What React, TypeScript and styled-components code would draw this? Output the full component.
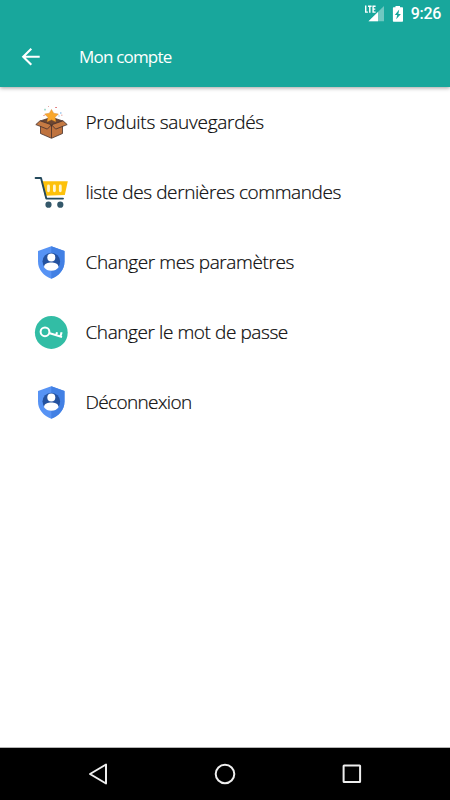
import React from "react";
import styled, { createGlobalStyle } from "styled-components";

const GlobalStyle = createGlobalStyle`
  * { box-sizing: border-box; }
  body { margin: 0; background: #fff; }
`;

const Screen = styled.main`
  width: 450px;
  height: 800px;
  display: flex;
  flex-direction: column;
  background: #fff;
  font-family: "Open Sans", "Noto Sans", sans-serif;
  overflow: hidden;
`;

const Header = styled.header`
  height: 87px;
  flex: none;
  background: #18a79c;
  box-shadow: 0 1px 4px rgba(0, 0, 0, 0.38);
  color: #fff;
`;

const StatusBar = styled.div`
  height: 27px;
  display: flex;
  justify-content: flex-end;
  align-items: center;
  padding-right: 9px;
`;

const Clock = styled.span`
  font: 500 16px/27px Roboto, sans-serif;
  letter-spacing: -0.3px;
  margin-left: 7px;
`;

const Toolbar = styled.div`
  height: 60px;
  display: flex;
  align-items: center;
  padding-left: 19px;
`;

const Title = styled.h1`
  margin: 0 0 0 36px;
  font-size: 17px;
  font-weight: 400;
  line-height: 24px;
  letter-spacing: -0.8px;
`;

const Menu = styled.ul`
  flex: 1;
  margin: 0;
  padding: 0;
  list-style: none;
`;

const MenuItem = styled.li`
  height: 70px;
  display: flex;
  align-items: center;
  padding-left: 34px;
`;

const Label = styled.span<{ $spacing: number }>`
  margin-left: 17.5px;
  color: #080808;
  font-size: 19px;
  font-weight: 300;
  line-height: 28px;
  white-space: nowrap;
  -webkit-text-stroke: 0.2px #080808;
  letter-spacing: ${(p) => p.$spacing}px;
`;

const NavBar = styled.nav`
  height: 53px;
  flex: none;
  display: flex;
  justify-content: space-between;
  align-items: center;
  padding: 0 84px;
  background: #000;
  border-top: 1px solid #b4b4b4;
`;

const Icon = styled.svg`
  display: block;
  flex: none;
`;

const Signal = () => (
  <Icon width="20" height="20" viewBox="0 0 20 20">
    <path d="M4.5 17.3 20 2V17.3Z" fill="#fff" opacity=".38" />
    <path d="M4.5 17.3 14 8V17.3Z" fill="#fff" />
    <path
      d="M1.7 1.5v6.6h2.2M4 2.2h3.6M5.8 2.2v6.6M11.6 2.2H9.1v5.9h2.5M9.1 5.1h2.2"
      fill="none"
      stroke="#fff"
      strokeWidth="1.4"
    />
  </Icon>
);

const Battery = () => (
  <Icon width="12" height="18" viewBox="0 0 12 18">
    <path d="M3.5 1H8v1.2h2.3q.7 0 .7.7v13.2q0 .7-.7.7H1.6q-.7 0-.7-.7V2.9q0-.7.7-.7h1.9Z" fill="#fff" />
    <path d="M7.2 4.6 2.8 10h2.4l-1 4.3L8.9 9H6.4Z" fill="#18a79c" />
  </Icon>
);

const StatusIcons = styled.div`
  display: flex;
  align-items: center;
  gap: 8px;
`;

const Back = () => (
  <Icon width="24" height="24" viewBox="0 0 24 24">
    <path d="M12.3 3.8 4.2 11.8l8.1 8M4.2 11.8H20.7" fill="none" stroke="#fff" strokeWidth="2.1" />
  </Icon>
);

const BoxIcon = () => (
  <Icon width="34" height="34" viewBox="6 3 34 34">
    <path d="M12.5 20.5h22v11L23.5 36.3 12.5 31.5Z" fill="#bf733f" stroke="#44302c" strokeWidth=".8" />
    <path d="M12 19l11.5-3.8L35 19l-11.5 5Z" fill="#6d4631" stroke="#44302c" strokeWidth=".7" />
    <path d="m23.5 7.400 2.200 3.800 4.700.8-3.300 3.300.7 4.500-4.300-2-4.300 2 .7-4.500-3.300-3.300 4.700-.8Z" fill="#f9a72b" stroke="#ce7d2a" strokeWidth=".4" />
    <path d="m12 18.8 11.5 4-4.2 4.3L7.8 22.6Z" fill="#c57a43" stroke="#44302c" strokeWidth=".8" />
    <path d="m35 18.8-11.5 4 4.2 4.3 11.5-4.5Z" fill="#c57a43" stroke="#44302c" strokeWidth=".8" />
    <path d="M23.5 23v13" stroke="#44302c" strokeWidth=".8" />
    <g fill="none" strokeWidth="1">
      <path d="M17 6.8v1.7" stroke="#57b59b" />
      <path d="M20 4.5h1M33 13.2h1.5" stroke="#e6aaa5" />
      <path d="M27.3 5.5h1.5M15.5 13.5h1" stroke="#dc5e63" />
      <path d="M32 11h1.5M30.5 14h1" stroke="#69a7df" />
    </g>
  </Icon>
);

const CartIcon = () => (
  <Icon width="34" height="34" viewBox="6 5 34 34">
    <path d="M13.5 11.3h26.3l-3 13.7-20 .8Z" fill="#fdc10b" />
    <path d="M20.5 16v4.8M26.4 16v4.8M32.3 16v4.8" stroke="#fff6d1" strokeWidth="2.8" strokeLinecap="round" />
    <path d="M7.6 8H13l5.3 20.600H35" fill="none" stroke="#24495c" strokeWidth="1.9" strokeLinecap="round" strokeLinejoin="round" />
    <g fill="#34586a">
      <circle cx="20.5" cy="34.7" r="3.1" />
      <circle cx="32.3" cy="34.7" r="3.1" />
    </g>
  </Icon>
);

const ShieldIcon = () => (
  <Icon width="34" height="34" viewBox="6 5 34 34">
    <path d="M23.3 6.3 36.5 11v10.5c0 8-5.5 14.5-13.2 17.2C15.5 36 10 29.5 10 21.5V11Z" fill="#5793f4" />
    <path d="M23.3 6.3 36.5 11v10.5c0 8-5.5 14.5-13.2 17.2Z" fill="#4280e4" />
    <circle cx="23.3" cy="21.5" r="8.8" fill="#25529f" />
    <circle cx="23.3" cy="17.4" r="4" fill="#fff" />
    <path d="M16 27.200c.3-3.800 4-4.700 7.3-4.700s7 .9 7.3 4.700c-1.700 2.300-4.200 3.600-7.3 3.600s-5.600-1.300-7.3-3.600Z" fill="#fff" />
  </Icon>
);

const KeyIcon = () => (
  <Icon width="34" height="34" viewBox="6 5 34 34">
    <circle cx="23.3" cy="22.5" r="16.4" fill="#32bda5" />
    <g fill="none" stroke="#fff">
      <circle cx="17" cy="21.8" r="4.4" strokeWidth="2" />
      <path d="m21 23 13 4M28.2 25.3l.8-3.1M32.4 26.5l1.2-4.2" strokeWidth="2.1" />
    </g>
  </Icon>
);

const items = [
  { text: "Produits sauvegardés", icon: <BoxIcon />, spacing: -0.27 },
  { text: "liste des dernières commandes", icon: <CartIcon />, spacing: -0.4 },
  { text: "Changer mes paramètres", icon: <ShieldIcon />, spacing: -0.39 },
  { text: "Changer le mot de passe", icon: <KeyIcon />, spacing: -0.42 },
  { text: "Déconnexion", icon: <ShieldIcon />, spacing: -0.64 },
];

export default function App() {
  return (
    <Screen>
      <GlobalStyle />
      <Header>
        <StatusBar>
          <StatusIcons>
            <Signal />
            <Battery />
          </StatusIcons>
          <Clock>9:26</Clock>
        </StatusBar>
        <Toolbar>
          <Back />
          <Title>Mon compte</Title>
        </Toolbar>
      </Header>
      <Menu>
        {items.map((item) => (
          <MenuItem key={item.text}>
            {item.icon}
            <Label $spacing={item.spacing}>{item.text}</Label>
          </MenuItem>
        ))}
      </Menu>
      <NavBar>
        <Icon width="28" height="28" viewBox="0 0 28 28">
          <path d="M22 4.5v19L6 14Z" fill="none" stroke="#eee" strokeWidth="2" strokeLinejoin="round" />
        </Icon>
        <Icon width="28" height="28" viewBox="0 0 28 28">
          <circle cx="14" cy="14" r="9.3" fill="none" stroke="#eee" strokeWidth="2" />
        </Icon>
        <Icon width="28" height="28" viewBox="0 0 28 28">
          <rect x="5.6" y="5.6" width="16.5" height="16.5" rx=".5" fill="none" stroke="#eee" strokeWidth="2" />
        </Icon>
      </NavBar>
    </Screen>
  );
}
